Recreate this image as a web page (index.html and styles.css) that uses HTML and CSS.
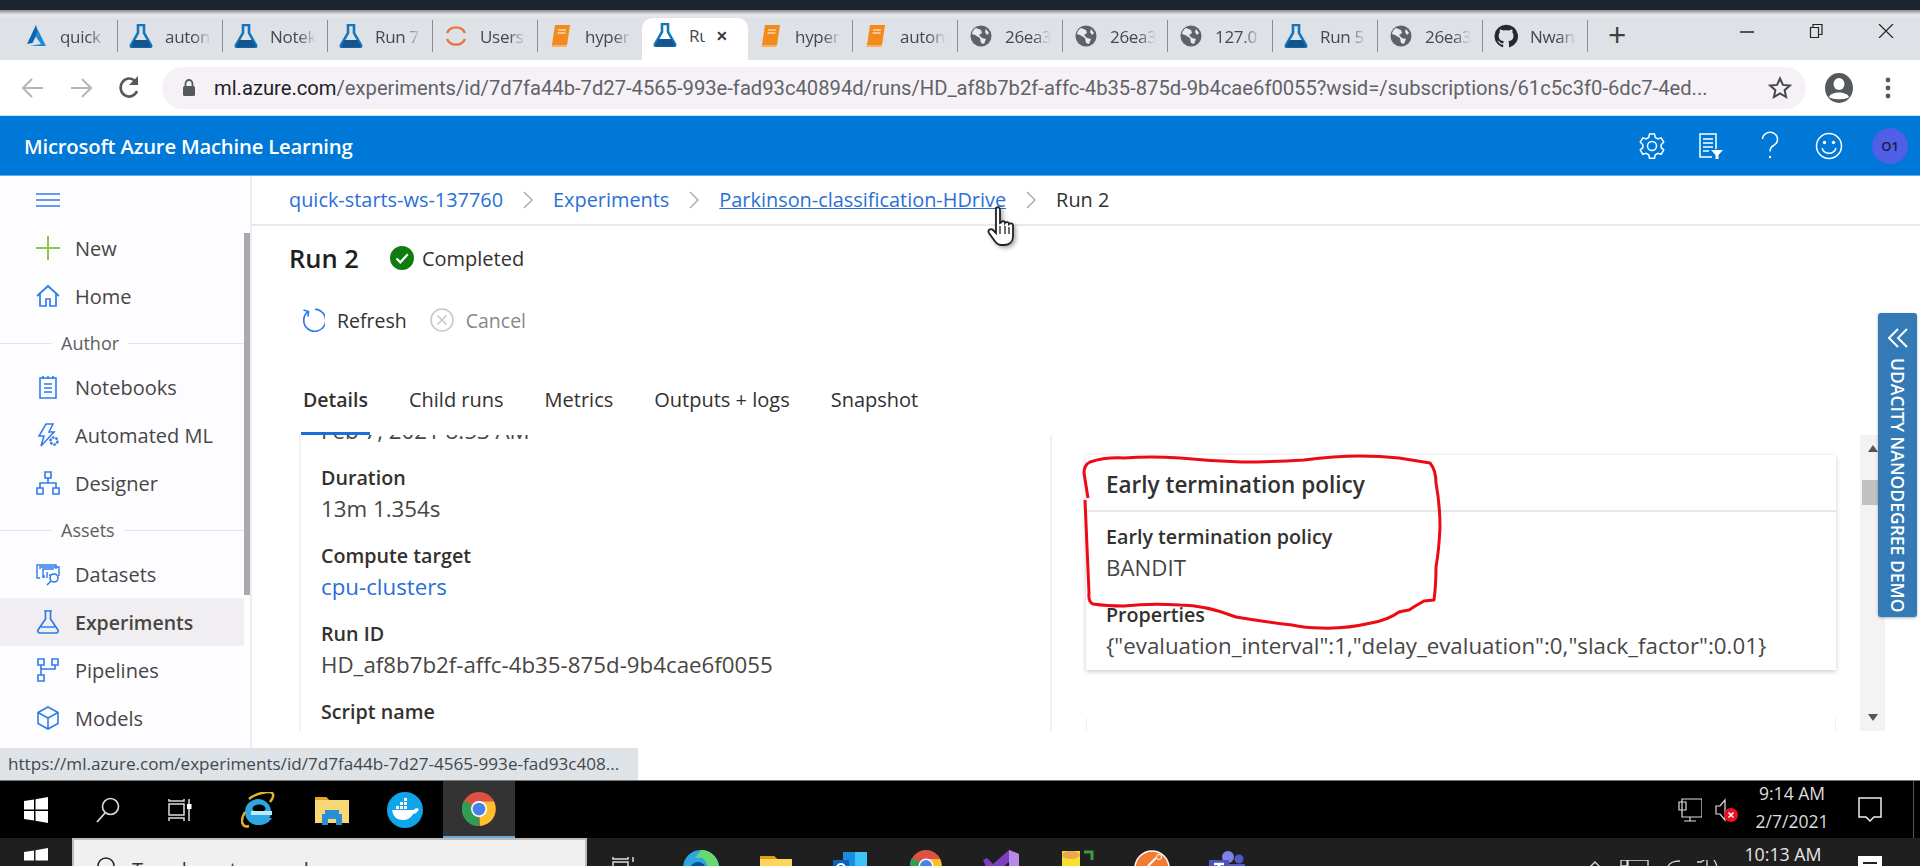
FILE: index.html
```html
<!DOCTYPE html>
<html lang="en">
<head>
<meta charset="utf-8">
<title>Run 2 - Microsoft Azure Machine Learning</title>
<link rel="stylesheet" href="styles.css">
</head>
<body>
<svg class="defs" width="0" height="0">
  <defs>
    <symbol id="flask" viewBox="0 0 24 24"><path d="M9 1h6v8l7 12c.6 1.2-.2 2.5-1.500 2.500h-17C2.200 23.500 1.400 22.200 2 21L9 9z" fill="none" stroke="#1477bd" stroke-width="2.600"/><path d="M5.500 16h13l3 5.500c.3.900-.3 2-1.200 2H3.700c-.9 0-1.500-1.100-1.200-2z" fill="#14558f"/></symbol>
    <symbol id="book" viewBox="0 0 24 24"><path d="M6 1h15l-3 20H3z" fill="#f28a1c"/><path d="M3 21l-.5 2H17l.8-2z" fill="#f7b267"/><path d="M9 6h8M8.500 9h8" stroke="#fff" stroke-width="1.200"/></symbol>
    <symbol id="globe" viewBox="0 0 24 24"><circle cx="12" cy="12" r="10.500" fill="#5f6368"/><path d="M7 4l5 2 1 3-3 2 3 3 4 1-2 5-3-1-1-5-5-3-3-1c0-2 2-5 4-6zM17 5l3 4-2 2-2-3z" fill="#e8eaed"/></symbol>
    <symbol id="chrome" viewBox="0 0 32 32"><circle cx="16" cy="16" r="16" fill="#dd5144"/><path d="M16 16L2 24A16 16 0 0 0 16 32z" fill="#2e9e50"/><path d="M16 16l-14 8A16 16 0 0 1 2 8z" fill="#2e9e50"/><path d="M16 9h14a16 16 0 0 1-13 23z" fill="#fbc02d"/><circle cx="16" cy="16" r="7.500" fill="#fff"/><circle cx="16" cy="16" r="6" fill="#4a80e8"/></symbol>
    <symbol id="chev" viewBox="0 0 10 18"><path d="M1 1l8 8-8 8" fill="none" stroke="#a6a4a2" stroke-width="1.300"/></symbol>
  </defs>
</svg>

<div class="desktop-top"></div>
<div class="window-shadow"></div>

<div class="tabstrip">
  <div class="tab"><svg class="tab-icon" viewBox="0 0 24 24"><path d="M12 1L3 20l5.500-1L14 8z" fill="#0a66b5"/><path d="M13.500 5L22 22H6l11-2-5-7z" fill="#1f8ad6"/></svg><span class="tab-text">quick</span></div>
  <div class="tab"><svg class="tab-icon"><use href="#flask"/></svg><span class="tab-text">auton</span></div>
  <div class="tab"><svg class="tab-icon"><use href="#flask"/></svg><span class="tab-text">Notek</span></div>
  <div class="tab"><svg class="tab-icon"><use href="#flask"/></svg><span class="tab-text">Run 7</span></div>
  <div class="tab"><svg class="tab-icon" viewBox="0 0 24 24"><path d="M3 9a10 10 0 0 1 18 0M21 15a10 10 0 0 1-18 0" fill="none" stroke="#e8743b" stroke-width="2.400"/></svg><span class="tab-text">Users</span></div>
  <div class="tab tab-before-active"><svg class="tab-icon"><use href="#book"/></svg><span class="tab-text">hyper</span></div>
  <div class="tab tab-active"><svg class="tab-icon"><use href="#flask"/></svg><span class="tab-text tab-text-short">Ru</span><span class="tab-close">✕</span></div>
  <div class="tab"><svg class="tab-icon"><use href="#book"/></svg><span class="tab-text">hyper</span></div>
  <div class="tab"><svg class="tab-icon"><use href="#book"/></svg><span class="tab-text">auton</span></div>
  <div class="tab"><svg class="tab-icon"><use href="#globe"/></svg><span class="tab-text">26ea3</span></div>
  <div class="tab"><svg class="tab-icon"><use href="#globe"/></svg><span class="tab-text">26ea3</span></div>
  <div class="tab"><svg class="tab-icon"><use href="#globe"/></svg><span class="tab-text">127.0</span></div>
  <div class="tab"><svg class="tab-icon"><use href="#flask"/></svg><span class="tab-text">Run 5</span></div>
  <div class="tab"><svg class="tab-icon"><use href="#globe"/></svg><span class="tab-text">26ea3</span></div>
  <div class="tab"><svg class="tab-icon" viewBox="0 0 24 24"><path d="M12 .8a11.500 11.500 0 0 0-3.600 22.400c.6.100.8-.3.800-.6v-2.100c-3.200.7-3.900-1.400-3.900-1.400-.5-1.300-1.300-1.700-1.300-1.700-1-.7.100-.7.100-.7 1.200.1 1.800 1.200 1.800 1.200 1 1.800 2.700 1.300 3.400 1 .1-.8.400-1.300.7-1.600-2.600-.3-5.300-1.300-5.300-5.700 0-1.300.5-2.300 1.200-3.100-.1-.3-.5-1.500.1-3.100 0 0 1-.3 3.200 1.200a11 11 0 0 1 5.800 0c2.200-1.500 3.200-1.200 3.200-1.200.6 1.600.2 2.800.1 3.100.8.800 1.200 1.800 1.200 3.100 0 4.400-2.700 5.400-5.300 5.700.4.400.8 1.100.8 2.200v3.200c0 .3.200.7.800.6A11.500 11.500 0 0 0 12 .8z" fill="#24292e"/></svg><span class="tab-text">Nwan</span></div>
  <div class="tab-new">+</div>
  <div class="window-controls">
    <svg width="16" height="14" viewBox="0 0 16 14"><path d="M1 8h14" stroke="#222" stroke-width="1.500"/></svg>
    <svg width="16" height="14" viewBox="0 0 16 14"><path d="M2.500 3.500h8v10h-8zM5 3.500V.5h9v10h-3.500" fill="none" stroke="#222" stroke-width="1.200"/></svg>
    <svg width="18" height="14" viewBox="0 0 18 14"><path d="M2 0l14 14M16 0L2 14" stroke="#222" stroke-width="1.200"/></svg>
  </div>
</div>

<div class="toolbar">
  <svg class="tb-btn" width="24" height="24" viewBox="0 0 24 24"><path d="M22 12H3M11 3l-9 9 9 9" fill="none" stroke="#b3b5b8" stroke-width="2"/></svg>
  <svg class="tb-btn" width="24" height="24" viewBox="0 0 24 24"><path d="M2 12h19M13 3l9 9-9 9" fill="none" stroke="#b3b5b8" stroke-width="2"/></svg>
  <svg class="tb-btn" width="24" height="26" viewBox="0 0 24 26"><path d="M20 16a8.500 9 0 1 1-2-10" fill="none" stroke="#55585c" stroke-width="2.600"/><path d="M21 1v9h-9z" fill="#55585c"/></svg>
  <div class="omnibox">
    <svg class="lock" width="12" height="18" viewBox="0 0 12 18"><path d="M2.500 7V5a3.500 4 0 0 1 7 0v2" fill="none" stroke="#55585c" stroke-width="1.800"/><rect y="7" width="12" height="10" rx="1.500" fill="#55585c"/></svg>
    <span class="url"><span class="url-host">ml.azure.com</span>/experiments/id/7d7fa44b-7d27-4565-993e-fad93c40894d/runs/HD_af8b7b2f-affc-4b35-875d-9b4cae6f0055?wsid=/subscriptions/61c5c3f0-6dc7-4ed...</span>
    <svg class="star" width="24" height="24" viewBox="0 0 24 24"><path d="M12 2.500l2.900 6.400 6.900.7-5.200 4.600 1.500 6.900-6.100-3.600-6.100 3.600 1.500-6.900-5.200-4.600 6.900-.7z" fill="none" stroke="#44474b" stroke-width="2"/></svg>
  </div>
  <svg class="profile" width="28" height="30" viewBox="0 0 28 30"><ellipse cx="14" cy="15" rx="14" ry="15" fill="#55585c"/><ellipse cx="14" cy="11" rx="5.500" ry="6" fill="#fff"/><path d="M4 24c2-6 18-6 20 0-3 3-17 3-20 0z" fill="#fff"/></svg>
  <svg class="dots" width="6" height="24" viewBox="0 0 6 24"><circle cx="3" cy="4" r="2.400" fill="#55585c"/><circle cx="3" cy="12" r="2.400" fill="#55585c"/><circle cx="3" cy="20" r="2.400" fill="#55585c"/></svg>
</div>

<header class="az-header">
  <div class="az-title">Microsoft Azure Machine Learning</div>
  <div class="az-icons">
    <svg width="28" height="28" viewBox="0 0 26 28"><path d="M10.500 2h5l.8 3.400 2.600 1.500 3.300-1 2.500 4.300-2.500 2.400v3l2.500 2.400-2.500 4.300-3.300-1-2.600 1.500-.8 3.400h-5l-.8-3.400-2.600-1.500-3.300 1L1.300 18l2.500-2.400v-3L1.300 10.200l2.500-4.300 3.300 1 2.600-1.500z" fill="none" stroke="#fff" stroke-width="1.500"/><circle cx="13" cy="14" r="4.500" fill="none" stroke="#fff" stroke-width="1.500"/></svg>
    <svg width="28" height="28" viewBox="0 0 26 28"><path d="M14 25H2V2h16v15M5 7h10M5 11h10M5 15h10M5 19h6" fill="none" stroke="#fff" stroke-width="1.500"/><path d="M13 18h12l-4.500 5v4h-3v-4z" fill="#fff"/></svg>
    <svg width="28" height="30" viewBox="0 0 20 30"><path d="M2.500 8a7.500 7 0 1 1 11 6.500c-2.500 1.500-3.500 3-3.500 6" fill="none" stroke="#fff" stroke-width="1.500"/><circle cx="10" cy="26" r="1.200" fill="#fff"/></svg>
    <svg width="28" height="28" viewBox="0 0 28 28"><circle cx="14" cy="14" r="12.500" fill="none" stroke="#fff" stroke-width="1.500"/><circle cx="9.500" cy="10.500" r="1.700" fill="#fff"/><circle cx="18.500" cy="10.500" r="1.700" fill="#fff"/><path d="M7 16c2 7 12 7 14 0" fill="none" stroke="#fff" stroke-width="1.500"/></svg>
    <div class="az-avatar">O1</div>
  </div>
</header>

<div class="app">
  <aside class="sidebar">
    <nav class="side-nav">
      <div class="side-burger"><svg width="24" height="14" viewBox="0 0 24 14"><path d="M0 1h24M0 7h24M0 13h24" stroke="#2f7bea" stroke-width="1.600"/></svg></div>
      <div class="side-item"><svg class="side-icon" viewBox="0 0 24 24"><path d="M12 0v24M0 12h24" stroke="#8cc84b" stroke-width="2"/></svg><span>New</span></div>
      <div class="side-item"><svg class="side-icon" viewBox="0 0 24 24"><path d="M1 12L12 2l11 10M4 10v12h6v-7h4v7h6V10" fill="none" stroke="#2f7bea" stroke-width="1.700"/></svg><span>Home</span></div>
      <div class="side-section"><span>Author</span></div>
      <div class="side-item"><svg class="side-icon" viewBox="0 0 24 24"><path d="M4 3h16v20H4zM8 9h8M8 13h8M8 17h8M7 1v3M12 1v3M17 1v3" fill="none" stroke="#2f7bea" stroke-width="1.600"/></svg><span>Notebooks</span></div>
      <div class="side-item"><svg class="side-icon" viewBox="0 0 24 24"><path d="M10 1h7l-4 8h5L5 23l3-10H3z" fill="none" stroke="#2f7bea" stroke-width="1.500"/><circle cx="18" cy="18" r="3.500" fill="none" stroke="#2f7bea" stroke-width="2.400" stroke-dasharray="2.500 1"/></svg><span>Automated ML</span></div>
      <div class="side-item"><svg class="side-icon" viewBox="0 0 24 24"><path d="M9 1h6v6H9zM1 17h6v6H1zM17 17h6v6h-6zM12 7v5M4 17v-5h16v5" fill="none" stroke="#2f7bea" stroke-width="1.600"/></svg><span>Designer</span></div>
      <div class="side-section"><span>Assets</span></div>
      <div class="side-item"><svg class="side-icon" viewBox="0 0 24 24"><path d="M4 16H1V3h19v4M4 7V5h19v9" fill="none" stroke="#2f7bea" stroke-width="1.400"/><path d="M7 16V7h11M8 13v3M11 10v6M14 12v2" fill="none" stroke="#2f7bea" stroke-width="1.400"/><circle cx="18" cy="16" r="4" fill="none" stroke="#2f7bea" stroke-width="1.600"/><path d="M15 19l-4 4" stroke="#2f7bea" stroke-width="1.600"/></svg><span>Datasets</span></div>
      <div class="side-item side-item-active"><svg class="side-icon" viewBox="0 0 24 24"><path d="M8 1h8M9.500 1v8L2 20c-.7 1.500.3 3 2 3h16c1.700 0 2.700-1.500 2-3L14.500 9V1M5 17h14" fill="none" stroke="#2f7bea" stroke-width="1.700"/></svg><span>Experiments</span></div>
      <div class="side-item"><svg class="side-icon" viewBox="0 0 24 24"><path d="M2 1h6v6H2zM16 1h6v6h-6zM2 17h6v6H2zM5 7v10M19 7v4H5" fill="none" stroke="#2f7bea" stroke-width="1.600"/></svg><span>Pipelines</span></div>
      <div class="side-item"><svg class="side-icon" viewBox="0 0 24 24"><path d="M12 1l10 5.500v11L12 23 2 17.500v-11zM2 6.500L12 12l10-5.500M12 12v11" fill="none" stroke="#2f7bea" stroke-width="1.600"/></svg><span>Models</span></div>
    </nav>
    <div class="side-scroll"><div class="side-thumb"></div></div>
  </aside>

  <main class="content">
    <div class="breadcrumb">
      <a class="crumb">quick-starts-ws-137760</a><svg class="crumb-sep"><use href="#chev"/></svg>
      <a class="crumb">Experiments</a><svg class="crumb-sep"><use href="#chev"/></svg>
      <a class="crumb crumb-hover">Parkinson-classification-HDrive</a><svg class="crumb-sep"><use href="#chev"/></svg>
      <span class="crumb-current">Run 2</span>
    </div>

    <div class="title-row">
      <h1 class="run-title">Run 2</h1>
      <svg width="24" height="24" viewBox="0 0 24 24"><circle cx="12" cy="12" r="12" fill="#107c10"/><path d="M6.500 12.500l3.800 3.800 7.500-8" fill="none" stroke="#fff" stroke-width="2.200"/></svg>
      <span class="run-status">Completed</span>
    </div>

    <div class="command-row">
      <svg width="24" height="24" viewBox="0 0 24 24"><path d="M7 3.600A11 11 0 1 0 14 1.300" fill="none" stroke="#2f7bea" stroke-width="1.700"/><path d="M2.500 2l5 1.500L7 8.500" fill="none" stroke="#2f7bea" stroke-width="1.700"/></svg>
      <span class="command">Refresh</span>
      <svg class="command-gap" width="24" height="24" viewBox="0 0 24 24"><circle cx="12" cy="12" r="11" fill="none" stroke="#c8c6c4" stroke-width="1.500"/><path d="M7.500 7.500l9 9M16.500 7.500l-9 9" stroke="#c8c6c4" stroke-width="1.500"/></svg>
      <span class="command command-off">Cancel</span>
    </div>

    <div class="pivot">
      <span class="pivot-item pivot-active">Details</span>
      <span class="pivot-item">Child runs</span>
      <span class="pivot-item">Metrics</span>
      <span class="pivot-item">Outputs + logs</span>
      <span class="pivot-item">Snapshot</span>
    </div>

    <div class="panels">
      <section class="left-panel">
        <div class="detail-scroll">
          <div class="field"><div class="field-value">Feb 7, 2021 8:53 AM</div></div>
          <div class="field"><div class="field-label">Duration</div><div class="field-value">13m 1.354s</div></div>
          <div class="field"><div class="field-label">Compute target</div><div class="field-value field-link">cpu-clusters</div></div>
          <div class="field"><div class="field-label">Run ID</div><div class="field-value">HD_af8b7b2f-affc-4b35-875d-9b4cae6f0055</div></div>
          <div class="field"><div class="field-label">Script name</div></div>
        </div>
      </section>
      <section class="right-panel">
        <div class="cards">
          <div class="card">
            <h2 class="card-title">Early termination policy</h2>
            <div class="card-body">
              <div class="field"><div class="field-label">Early termination policy</div><div class="field-value">BANDIT</div></div>
              <div class="field field-last"><div class="field-label">Properties</div><div class="field-value">{"evaluation_interval":1,"delay_evaluation":0,"slack_factor":0.01}</div></div>
            </div>
          </div>
          <div class="card card-next"></div>
        </div>
        <div class="v-scroll">
          <span class="arrow arrow-up"></span>
          <div class="v-thumb"></div>
          <span class="arrow arrow-down"></span>
        </div>
      </section>
    </div>
  </main>

  <div class="status-bubble">https://ml.azure.com/experiments/id/7d7fa44b-7d27-4565-993e-fad93c408...</div>
</div>

<div class="taskbar">
  <svg class="tb-start" width="24" height="26" viewBox="0 0 24 26"><path d="M0 4l10-1.500v10H0zM11.500 2.300L24 0v12.500H11.500zM0 14h10v9.500L0 22zM11.500 14H24v12l-12.500-2.200z" fill="#fff"/></svg>
  <svg class="tb-search" width="24" height="26" viewBox="0 0 24 26"><circle cx="14.500" cy="9.500" r="8" fill="none" stroke="#ddd" stroke-width="1.600"/><path d="M9 16L1 25" stroke="#ddd" stroke-width="1.800"/></svg>
  <svg class="tb-view" width="24" height="24" viewBox="0 0 24 24"><path d="M1 1v2h15V1M1 6h15v11H1zM1 23v-3h15v3M21 1v5M21 11v12" fill="none" stroke="#ddd" stroke-width="1.500"/><rect x="19" y="6" width="4.500" height="5" fill="#fff"/></svg>
  <svg class="tb-ie" width="34" height="36" viewBox="0 0 34 36"><ellipse cx="17" cy="20" rx="13" ry="13" fill="#2ea7e0"/><ellipse cx="18" cy="16.500" rx="6.500" ry="4" fill="#000"/><rect x="10" y="19" width="21" height="4" fill="#b9ecff"/><path d="M22 26h9c-2 3-6 7-12 7-4 0-7-2-9-5" fill="#2ea7e0"/><path d="M8 7C15 1 30-2 32 2c1 3-3 8-3 8M4 20C-2 30 2 36 8 34" fill="none" stroke="#e6b422" stroke-width="2.400"/></svg>
  <svg class="tb-folder" width="34" height="32" viewBox="0 0 34 32"><path d="M0 3h11l3 3h20v23H0z" fill="#f8d775"/><path d="M0 3h11l3 3H0z" fill="#e0a526"/><path d="M10 16h14v4h3v11h-6v-6h-8v6H7V20h3z" fill="#2b8ed6"/></svg>
  <svg class="tb-docker" width="36" height="36" viewBox="0 0 36 36"><circle cx="18" cy="18" r="18" fill="#0ea5ea"/><path d="M5 18h22c1-2 3-2 5-1-2 4-4 5-6 5-2 4-6 6-10 6-7 0-10-4-11-10z" fill="#fff"/><path d="M9 14h3v3H9zM13 14h3v3h-3zM17 14h3v3h-3zM13 10h3v3h-3zM17 10h3v3h-3zM17 6h3v3h-3z" fill="#fff"/></svg>
  <div class="tb-chrome"><svg width="34" height="34"><use href="#chrome"/></svg></div>
  <div class="tb-tray">
    <svg width="24" height="26" viewBox="0 0 24 26"><path d="M4 2h20v18H4zM12 20v4M6 24h12M1 5h7v8H1z" fill="#000" stroke="#ddd" stroke-width="1.200"/></svg>
    <div class="tray-sound"><svg width="24" height="26" viewBox="0 0 24 26"><path d="M2 9h4l5-6v20l-5-6H2z" fill="none" stroke="#ddd" stroke-width="1.200"/><circle cx="17" cy="18" r="7" fill="#e81123"/><path d="M14.500 15.500l5 5M19.500 15.500l-5 5" stroke="#fff" stroke-width="1.500"/></svg></div>
    <div class="tray-clock"><div>9:14 AM</div><div>2/7/2021</div></div>
    <svg class="tray-note" width="24" height="26" viewBox="0 0 24 26"><path d="M1 1h22v19h-7l-4 4-4-4H1z" fill="none" stroke="#eee" stroke-width="1.500"/></svg>
  </div>
</div>

<div class="taskbar-host">
  <svg class="host-start" width="24" height="26" viewBox="0 0 24 26"><path d="M0 4l10-1.500v10H0zM11.500 2.300L24 0v12.500H11.500z" fill="#fff"/></svg>
  <div class="host-search">
    <svg width="18" height="18" viewBox="0 0 18 18"><circle cx="9" cy="9" r="8" fill="none" stroke="#222" stroke-width="1.500"/></svg>
    <span>Type here to search</span>
  </div>
  <svg class="host-view" width="24" height="24" viewBox="0 0 24 24"><path d="M1 1v2h15V1M1 6h15v11H1zM21 1v5" fill="none" stroke="#ddd" stroke-width="1.500"/></svg>
  <svg class="host-icon host-edge" width="36" height="28" viewBox="0 0 36 28"><circle cx="18" cy="18" r="18" fill="#2aa6e0"/><path d="M18 0a18 18 0 0 1 18 18H24C24 10 20 6 12 8z" fill="#68d96e"/><circle cx="15" cy="20" r="8" fill="#0b4f8f"/></svg>
  <svg class="host-icon host-folder" width="32" height="28" viewBox="0 0 32 28"><path d="M0 4h14l3 3h15v21H0z" fill="#fcd462"/><path d="M0 4h14l3 3H0z" fill="#dc9f0f"/></svg>
  <svg class="host-icon host-outlook" width="34" height="28" viewBox="0 0 34 28"><path d="M10 2h24v26H10z" fill="#1a8be0"/><path d="M22 2h12v14H22z" fill="#3ec3f5"/><path d="M0 10h16v18H0z" fill="#0c63b6"/><circle cx="8" cy="18" r="4" fill="none" stroke="#fff" stroke-width="2"/></svg>
  <svg class="host-icon host-chrome" width="32" height="32"><use href="#chrome"/></svg>
  <svg class="host-icon host-vs" width="36" height="28" viewBox="0 0 36 28"><path d="M0 10l4-2 6 6L26 0l10 4v24H26V12L14 22l-6 6z" fill="#7d3fc0"/><path d="M26 0l10 4v24H26z" fill="#b88ae8"/></svg>
  <svg class="host-icon host-db" width="32" height="28" viewBox="0 0 32 28"><rect y="1" width="18" height="28" fill="#f7e02e"/><ellipse cx="9" cy="5" rx="9" ry="4" fill="#e8a94f"/><path d="M22 2h8v8" fill="none" stroke="#3a9b3f" stroke-width="3"/></svg>
  <svg class="host-icon host-orange" width="36" height="28" viewBox="0 0 36 28"><circle cx="18" cy="18" r="17" fill="#f37c33" stroke="#fff" stroke-width="1.500"/><path d="M14 16l8-8" stroke="#fff" stroke-width="2"/><circle cx="25" cy="7" r="2.500" fill="none" stroke="#fff"/></svg>
  <svg class="host-icon host-teams" width="36" height="28" viewBox="0 0 36 28"><circle cx="19" cy="7" r="6" fill="#7b83eb"/><circle cx="30" cy="9" r="4.500" fill="#5059c9"/><rect x="14" y="14" width="22" height="14" fill="#5059c9"/><rect y="10" width="20" height="18" fill="#4b53bc"/><path d="M5 14h10M10 14v12" stroke="#fff" stroke-width="2.400"/></svg>
  <div class="host-tray">
    <svg class="host-tray-icons" width="160" height="28" viewBox="0 0 160 28"><path d="M25 8l6-6 6 6M57 0h6v6h-6zM64 0h20v14H64zM104 8c0-5 6-7 12-7M133 2h4l6-4v26M150 0c4 6 4 10 0 16" fill="none" stroke="#ddd" stroke-width="1.300"/></svg>
    <span class="host-clock">10:13 AM</span>
    <svg class="host-note" width="24" height="28" viewBox="0 0 24 28"><rect width="24" height="28" fill="#fff"/><path d="M5 7h14M5 13h14" stroke="#222" stroke-width="2"/></svg>
  </div>
</div>

<div class="udacity">
  <svg class="udacity-chev" width="22" height="20" viewBox="0 0 22 20"><path d="M11 1L2 10l9 9M20 1l-9 9 9 9" fill="none" stroke="#fff" stroke-width="2"/></svg>
  <span class="udacity-text">UDACITY NANODEGREE DEMO</span>
</div>

<svg class="cursor" width="36" height="44" viewBox="0 0 36 44"><path d="M10 2c2-1.500 4-.5 4 2v13l1-.5c1-2 4-1.500 4 .5 1-1.500 4-1 4 1 1-1 4-1 4 1.500V30c0 5-3 9-9 9h-3c-3 0-5-2-7-5l-5-7c-2-3 2-5 4-3l3 3z" fill="#fff" stroke="#222" stroke-width="1.800"/><path d="M14 20v8M19 20v8M23 21v7" stroke="#222" stroke-width="1.300"/></svg>

<svg class="annotation" width="1920" height="866" viewBox="0 0 1920 866"><path d="M1088 498L1084 473Q1084 465 1090 462Q1105 457 1124 458Q1150 456 1180 458Q1210 461 1242 462Q1270 462 1304 460Q1335 456 1360 456Q1380 456 1399 458L1430 463Q1436 470 1436 483Q1440 505 1440 527Q1439 550 1436 567Q1436 585 1434 600L1424 601Q1415 606 1409 610Q1403 611 1399 612Q1388 620 1371 623Q1345 629 1321 628Q1305 628 1292 625Q1265 622 1236 617Q1205 605 1180 605Q1150 603 1124 606Q1107 606 1093 604Q1088 602 1089 593L1085 500" fill="none" stroke="#ee0a14" stroke-width="3" stroke-linejoin="round"/></svg>
</body>
</html>
```

FILE: styles.css
```css
* { box-sizing: border-box; }
html, body { margin: 0; padding: 0; }
body {
  width: 1920px;
  height: 866px;
  overflow: hidden;
  position: relative;
  display: flex;
  flex-direction: column;
  background: #fff;
  color: #323130;
  font-family: "Open Sans", "Liberation Sans", sans-serif;
}
.defs { position: absolute; }
.desktop-top { height: 10px; background: #1c2630; flex: none; }
.window-shadow { height: 8px; background: linear-gradient(#8a8c8e, #e9ebee 60%, #dee1e6); flex: none; }

/* tab strip */
.tabstrip { height: 42px; flex: none; background: #dee1e6; display: flex; align-items: flex-start; padding-left: 13px; }
.tab { width: 105px; height: 32px; margin-top: 2px; display: flex; align-items: center; padding-left: 11px; border-right: 1px solid #8b8d90; flex: none; }
.tab-before-active { border-right-color: transparent; width: 104px; }
.tab-active { width: 106px; height: 42px; margin-top: 0; padding-bottom: 8px; background: #fff; border-radius: 10px 10px 0 0; border-right: 0; }
.tab-icon { width: 24px; height: 24px; flex: none; }
.tab-text { width: 46px; margin-left: 12px; overflow: hidden; white-space: nowrap; font-size: 17px; letter-spacing: -.3px; color: #45484c; -webkit-mask-image: linear-gradient(90deg, #000 62%, transparent 100%); mask-image: linear-gradient(90deg, #000 62%, transparent 100%); }
.tab-text-short { width: 16px; -webkit-mask-image: none; mask-image: none; }
.tab-close { margin-left: 11px; font-size: 14px; color: #333; font-weight: 600; }
.tab-new { margin-left: 20px; font-size: 32px; line-height: 34px; color: #3c4043; }
.window-controls { margin-left: auto; width: 182px; padding-right: 25px; padding-left: 1px; display: flex; justify-content: space-between; align-items: center; height: 26px; }

/* toolbar */
.toolbar { height: 56px; flex: none; background: #fff; display: flex; align-items: center; padding-left: 21px; border-bottom: 1px solid #cde2f5; }
.tb-btn { flex: none; margin-right: 24px; }
.omnibox { width: 1644px; margin-left: -3px; height: 42px; flex: none; border-radius: 21px; background: #f5f1f6; display: flex; align-items: center; padding-left: 21px; }
.lock { flex: none; }
.url { margin-left: 19px; font-size: 20.200px; color: #5f6368; white-space: nowrap; width: 1532px; overflow: hidden; font-family: Roboto, sans-serif; }
.url-host { color: #202124; }
.star { margin-left: 22px; flex: none; }
.profile { margin-left: 19px; flex: none; }
.dots { margin-left: 32px; flex: none; }

/* azure header */
.az-header { height: 60px; flex: none; background: #0078d7; color: #fff; display: flex; align-items: center; padding-left: 24px; border-bottom: 1px solid #5aaef0; }
.az-title { font-size: 20.300px; font-weight: 600; letter-spacing: -.2px; }
.az-icons { margin-left: auto; display: flex; align-items: center; padding-right: 12px; gap: 31px; }
.az-avatar { width: 36px; height: 36px; border-radius: 50%; background: #4f5fe8; color: #1c1c3a; font-size: 13px; font-weight: 600; display: flex; align-items: center; justify-content: center; margin-left: -2px; }

/* app */
.app { position: relative; height: 604px; flex: none; display: flex; overflow: hidden; }
.sidebar { width: 252px; flex: none; display: flex; background: #fdfcfe; border-right: 2px solid #eeedef; }
.side-nav { width: 244px; flex: none; }
.side-burger { height: 48px; padding-left: 36px; display: flex; align-items: center; }
.side-item { height: 48px; display: flex; align-items: center; padding-left: 36px; font-size: 20px; color: #484644; }
.side-item-active { background: #f0eef0; font-weight: 600; font-size: 19.500px; border-radius: 0 3px 3px 0; }
.side-icon { width: 24px; height: 24px; margin-right: 15px; flex: none; }
.side-section { height: 43px; padding-top: 3px; display: flex; align-items: center; font-size: 18px; color: #605e5c; }
.side-section span { margin: 0 9px; }
.side-section::before { content: ""; width: 52px; height: 1px; background: #e4e2e6; flex: none; }
.side-section::after { content: ""; flex: 1; height: 1px; background: #e4e2e6; }
.side-scroll { width: 6px; flex: none; }
.side-thumb { margin-top: 57px; height: 362px; background: #aaa8ac; }

.content { flex: 1; min-width: 0; display: flex; flex-direction: column; }
.breadcrumb { height: 50px; flex: none; border-bottom: 2px solid #e9e8ea; display: flex; align-items: center; padding-left: 37px; font-size: 19.900px; padding-bottom: 1px; }
.crumb { color: #2b6fd6; }
.crumb-hover { text-decoration: underline; }
.crumb-sep { width: 10px; height: 18px; margin: 0 20px; flex: none; }
.crumb-current { color: #323130; }

.title-row { height: 64px; flex: none; display: flex; align-items: center; padding-left: 37px; }
.run-title { margin: 0 31px 0 0; font-size: 25.500px; font-weight: 600; color: #201f1e; }
.run-status { margin-left: 8px; font-size: 20px; color: #323130; }

.command-row { height: 60px; flex: none; display: flex; align-items: center; padding-left: 49px; }
.command { margin-left: 12px; font-size: 19.500px; color: #323130; }
.command-off { color: #8a8886; }
.command-gap { margin-left: 23px; }

.pivot { height: 85px; flex: none; display: flex; align-items: flex-end; padding-left: 49px; gap: 37px; }
.pivot-item { height: 49px; padding: 0 2px; font-size: 20px; color: #323130; line-height: 28px; border-bottom: 3px solid transparent; white-space: nowrap; }
.pivot-active { font-weight: 600; font-size: 19.500px; border-bottom-color: #1a6fd8; }

.panels { height: 296px; flex: none; display: flex; }
.left-panel { width: 751px; margin-left: 47px; flex: none; overflow: hidden; border-left: 2px solid #f1f0f2; padding-left: 20px; }
.detail-scroll { margin-top: -20px; }
.field { margin-bottom: 16px; }
.field-label { font-size: 19.700px; line-height: 31px; font-weight: 600; color: #323130; }
.field-value { font-size: 22.300px; line-height: 31px; color: #484644; white-space: nowrap; }
.field-link { color: #2b6fd6; }

.right-panel { flex: 1; min-width: 0; display: flex; border-left: 2px solid #f1f0f2; }
.cards { width: 808px; flex: none; padding: 20px 24px 0 34px; overflow: hidden; }
.card { height: 215px; background: #fff; box-shadow: 0 2px 5px rgba(0,0,0,.18), 0 0 2px rgba(0,0,0,.06); }
.card-title { margin: 0; height: 57px; padding: 4px 20px 0; display: flex; align-items: center; font-size: 22.500px; font-weight: 600; color: #323130; border-bottom: 2px solid #e8e7e9; }
.card-body { padding: 9px 20px 0; }
.field-last { margin-top: 15px; margin-bottom: 0; }
.card-next { margin-top: 48px; height: 40px; box-shadow: none; border-left: 1px solid #efeef0; border-right: 1px solid #efeef0; }
.v-scroll { width: 25px; flex: none; background: #f4f2f5; display: flex; flex-direction: column; align-items: center; padding: 10px 0; }
.arrow { width: 0; height: 0; border-left: 5px solid transparent; border-right: 5px solid transparent; }
.arrow-up { border-bottom: 7px solid #555; }
.arrow-down { border-top: 7px solid #555; margin-top: auto; }
.v-thumb { margin-top: 28px; width: 17px; height: 25px; background: #c1c0c2; margin-right: 5px; }

.status-bubble { position: absolute; left: 0; bottom: 0; width: 638px; height: 32px; background: #dee3e7; color: #45484c; font-size: 17.100px; line-height: 31px; padding-left: 8px; white-space: nowrap; overflow: hidden; }

/* taskbars */
.taskbar { height: 58px; flex: none; background: #000; border-top: 1px solid #777; display: flex; align-items: center; position: relative; }
.taskbar::after { content: ""; position: absolute; right: 6px; top: 0; width: 1px; height: 100%; background: #555; }
.tb-start { margin-left: 24px; flex: none; }
.tb-search { margin-left: 48px; flex: none; }
.tb-view { margin-left: 48px; flex: none; }
.tb-ie { margin-left: 49px; flex: none; }
.tb-folder { margin-left: 40px; flex: none; }
.tb-docker { margin-left: 38px; flex: none; }
.tb-chrome { margin-left: 20px; width: 72px; height: 100%; background: #333; border-bottom: 2px solid #6aa9dd; display: flex; align-items: center; justify-content: center; flex: none; }
.tb-tray { margin-left: auto; display: flex; align-items: center; padding-right: 38px; color: #ddd; font-size: 17.500px; }
.tray-sound { margin-left: 12px; margin-right: 6px; height: 26px; }
.tray-clock { width: 96px; text-align: center; line-height: 28px; padding-bottom: 6px; white-space: nowrap; }
.tray-note { margin-left: 18px; }

.taskbar-host { height: 28px; flex: none; background: #1f1f1f; display: flex; align-items: flex-start; overflow: hidden; }
.host-start { margin: 10px 0 0 24px; flex: none; }
.host-search { margin-left: 24px; width: 515px; height: 40px; background: #f0f0f0; border: 2px solid #bbb; display: flex; align-items: flex-start; padding: 17px 0 0 23px; font-size: 20px; color: #333; flex: none; }
.host-search span { margin-left: 17px; line-height: 30px; margin-top: -2px; white-space: nowrap; }
.host-view { margin: 18px 0 0 25px; flex: none; }
.host-icon { flex: none; margin-top: 12px; }
.host-edge { margin-left: 47px; }
.host-folder { margin-left: 41px; margin-top: 14px; }
.host-outlook { margin-left: 41px; }
.host-chrome { margin-left: 43px; }
.host-vs { margin-left: 41px; }
.host-db { margin-left: 43px; }
.host-orange { margin-left: 40px; }
.host-teams { margin-left: 39px; }
.host-tray { margin-left: auto; display: flex; align-items: flex-start; padding-right: 38px; color: #e6e6e6; font-size: 17.800px; }
.host-tray-icons { margin-top: 22px; margin-right: 12px; }
.host-clock { width: 94px; text-align: center; margin-top: 2px; line-height: 28px; white-space: nowrap; }
.host-note { margin-left: 28px; margin-top: 18px; }

/* overlays */
.udacity { position: absolute; left: 1878px; top: 313px; width: 39px; height: 304px; background: #337ab7; border-radius: 3px; color: #fff; display: flex; flex-direction: column; align-items: center; box-shadow: 0 1px 3px rgba(0,0,0,.3); }
.udacity-chev { margin-top: 15px; flex: none; }
.udacity-text { writing-mode: vertical-rl; font-size: 17.500px; font-weight: 600; margin-top: 10px; white-space: nowrap; }
.cursor { position: absolute; left: 986px; top: 206px; filter: drop-shadow(2px 2px 2px rgba(0,0,0,.35)); }
.annotation { position: absolute; left: 0; top: 0; pointer-events: none; }
```
